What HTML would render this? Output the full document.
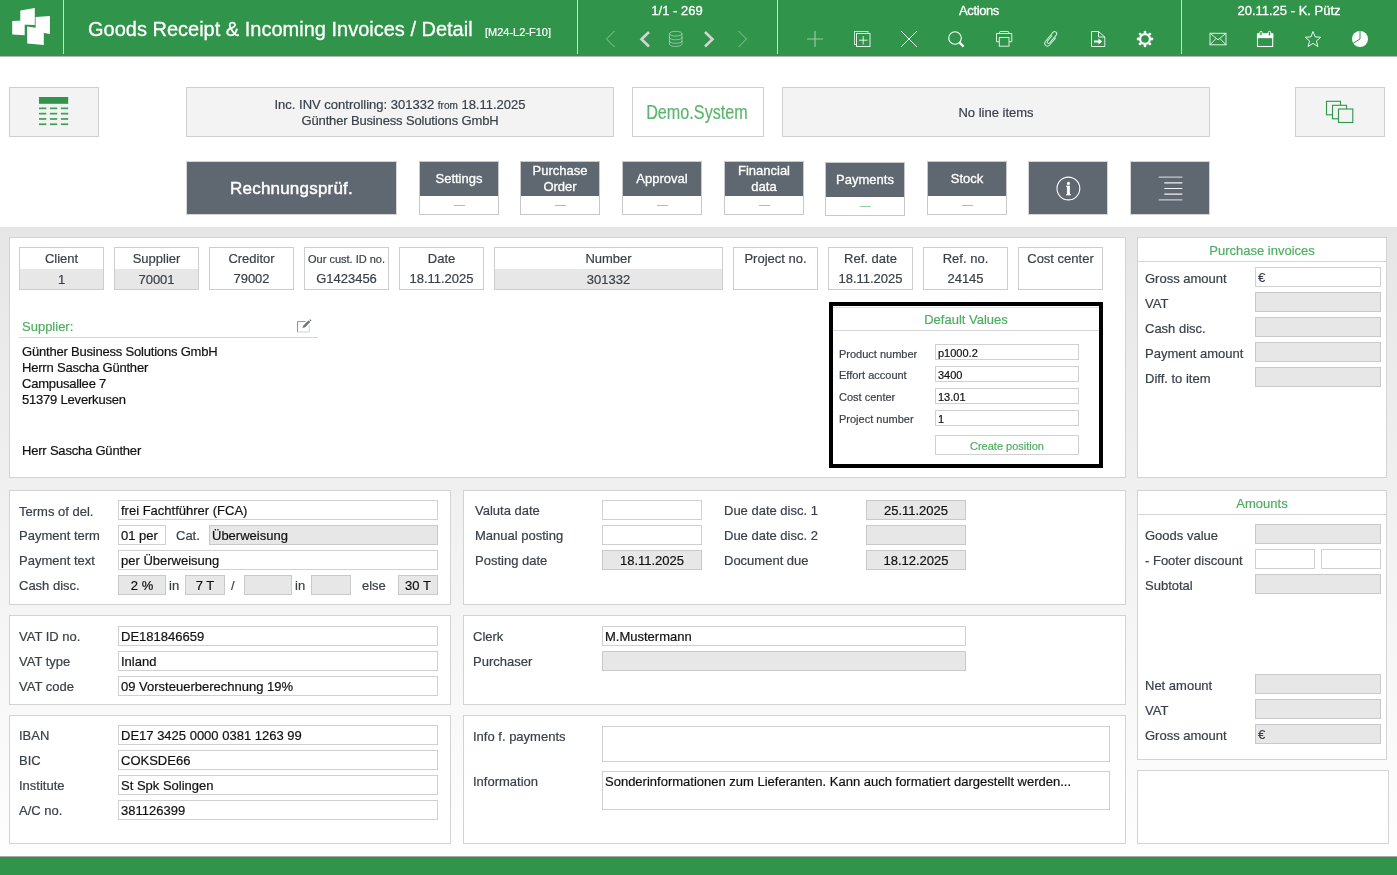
<!DOCTYPE html><html><head><meta charset='utf-8'><title>Goods Receipt &amp; Incoming Invoices / Detail</title><style>
*{box-sizing:border-box;margin:0;padding:0}
html,body{width:1397px;height:875px;overflow:hidden;background:#fff}
body{font-family:"Liberation Sans",sans-serif;font-size:13px;color:#39414a;position:relative;-webkit-text-stroke:.2px}
.a{position:absolute}
.hdr{left:0;top:0;width:1397px;height:57px;background:#30944a;border-bottom:1px solid #b9b4b9}
.vd{top:0;width:1px;height:54px;background:#d4d6d4}
.ht{-webkit-text-stroke:.3px;color:#fff;white-space:nowrap;text-align:center;height:16px;line-height:16px;top:3px}
.box{background:#f3f3f3;border:1px solid #cfcfcf}
.wbox{background:#fff;border:1px solid #cfcfcf}
.ctr{text-align:center;white-space:nowrap}
.tab{width:80px;height:54px;border:1px solid #c9c9c9;background:#fff}
.tab b{display:block;position:absolute;left:0;top:0;width:78px;height:34px;background:#5f6770;color:#fff;font-weight:normal;text-align:center;line-height:16px;-webkit-text-stroke:.3px}
.tab i{display:block;position:absolute;left:34px;top:43px;width:11px;height:1px;background:#8fd09b}
.dk{background:#5f6770;border:1px solid #d6d6d6}
.bg{left:0;top:227px;width:1397px;height:630px;background:linear-gradient(#e6e6e6 0,#fefefe 100%)}
.p{background:#fff;border:1px solid #d3d3d3}
.i{height:20px;line-height:20px;background:#fff;border:1px solid #d0d0d0;color:#111;padding-left:2px;white-space:nowrap;overflow:hidden}
.g{background:#e7e7e7;border-color:#c9c9c9}
.c{text-align:center;padding-left:0}
.l{height:20px;line-height:22px;white-space:nowrap}
.fb{width:85px;height:43px;background:#fff;border:1px solid #cdcdcd}
.fb u,.fb s{display:block;position:absolute;left:0;width:100%;text-align:center;text-decoration:none;white-space:nowrap;height:20px;line-height:20px}
.fb u{top:1px}
.fb s{top:21px;height:20px;line-height:21px}
.fb s{top:20px}
.fb.gg s{top:21px;background:#e7e7e7}
.gt{color:#4fae62;text-align:center;white-space:nowrap}
.hl{height:1px;background:#d6d6d6}
.sm{font-size:11px}
.foot{left:0;top:856px;width:1397px;height:19px;background:#30944a;border-top:1px solid #a9a6ad}
svg{position:absolute;overflow:visible}
</style></head><body><div class='a' style='left:0;top:0;width:1397px;height:875px;will-change:transform'>
<div class='a hdr'></div>
<div class='a vd' style='left:63px'></div>
<div class='a vd' style='left:577px'></div>
<div class='a vd' style='left:777px'></div>
<div class='a vd' style='left:1181px'></div>
<svg style="left:0;top:0" width="64" height="56" viewBox="0 0 64 56"><g fill="#fff">
<polygon points="20.3,10.4 34.8,8 34.8,25 20.3,24.6"/>
<polygon points="12.2,20.9 24.7,20.4 24.7,35.3 12.2,34.5"/>
<polygon points="35.6,17 49.9,15.9 49.9,34 35.6,31.5"/>
<polygon points="27.2,26.6 43.8,29 43.8,44.9 27.2,43.4"/>
</g></svg>
<div class='a' style='left:88px;top:16px;height:26px;line-height:26px;font-size:20px;color:#fff;white-space:nowrap;-webkit-text-stroke:.3px'>Goods Receipt &amp; Incoming Invoices / Detail</div>
<div class='a' style='left:485px;top:25px;height:14px;line-height:14px;font-size:11px;color:#fff;white-space:nowrap'>[M24-L2-F10]</div>
<div class='a ht' style='left:577px;width:200px'>1/1 - 269</div>
<div class='a ht' style='left:777px;width:404px;letter-spacing:-0.4px'>Actions</div>
<div class='a ht' style='left:1181px;width:216px'>20.11.25 - K. Pütz</div>
<svg style="left:0;top:0" width="1397" height="56" viewBox="0 0 1397 56"><polyline points="614.5,31 606.5,39 614.5,47" fill="none" stroke="#fff" stroke-opacity=".45" stroke-width="1"/><polyline points="649,32 641.5,39.3 649,46.5" fill="none" stroke="#d4d4d4" stroke-width="2.6"/><g fill="none" stroke="#fff" stroke-opacity=".45" stroke-width="1"><ellipse cx="675.7" cy="33.7" rx="6.3" ry="2.4"/><path d="M669.4 33.7v10.3c0 1.4 2.8 2.5 6.3 2.5s6.3-1.1 6.3-2.5V33.7M669.4 37.3c0 1.4 2.8 2.5 6.3 2.5s6.3-1.1 6.3-2.5M669.4 40.8c0 1.4 2.8 2.5 6.3 2.5s6.3-1.1 6.3-2.5"/></g><polyline points="705,32 712.5,39.3 705,46.5" fill="none" stroke="#d4d4d4" stroke-width="2.6"/><polyline points="738.5,31 746.5,39 738.5,47" fill="none" stroke="#fff" stroke-opacity=".45" stroke-width="1"/><path d="M815 31v16M807 39h16" fill="none" stroke="#fff" stroke-opacity=".5" stroke-width="1.2"/><g fill="none" stroke="#fff" stroke-opacity=".85" stroke-width="1"><rect x="854.5" y="31.5" width="13.5" height="13" stroke-opacity=".7"/><rect x="856.5" y="33.5" width="13.5" height="13" fill="#30944a"/><path d="M863.2 36v8.5M859 40.2h8.5"/></g><path d="M901 31l16 16M917 31l-16 16" fill="none" stroke="#fff" stroke-opacity=".9" stroke-width="1"/><circle cx="955" cy="38" r="6.3" fill="none" stroke="#fff" stroke-width="1.1"/><path d="M959.6 42.6l4 4" stroke="#fff" stroke-width="2.2" fill="none"/><g fill="none" stroke="#fff" stroke-opacity=".85" stroke-width="1"><path d="M999.5 33.5v-.8a1.2 1.2 0 0 1 1.2-1.2h7a1.2 1.2 0 0 1 1.2 1.2v.8"/><path d="M999.3 41.7h-2.8v-8.2h15.3v8.2h-2.8"/><rect x="999.3" y="37.5" width="9.7" height="8.7"/></g><g transform="translate(1051.1,39) rotate(-50) translate(-8.35,0)"><path d="M12.5 2.8H2.8A2.8 2.8 0 0 1 2.8 -2.8H14.6A2.1 2.1 0 0 1 14.6 1.4H4.5A1.4 1.4 0 0 1 4.5 -1.4H11.5" fill="none" stroke="#fff" stroke-opacity=".8" stroke-width="1"/></g><g stroke="#fff" stroke-opacity=".85" fill="none" stroke-width="1"><path d="M1091.5 31.5h7l6.3 5.5v9.5h-13.3z"/><path d="M1098.5 31.5v5.5h6.3"/></g><path d="M1094 40.6h4.5v-2l3.8 3-3.8 3v-2H1094z" fill="#fff"/><circle cx="1145" cy="39" r="4.9" fill="none" stroke="#fff" stroke-width="2.3"/><circle cx="1145.00" cy="32.10" r="1.45" fill="#fff"/><circle cx="1149.88" cy="34.12" r="1.45" fill="#fff"/><circle cx="1151.90" cy="39.00" r="1.45" fill="#fff"/><circle cx="1149.88" cy="43.88" r="1.45" fill="#fff"/><circle cx="1145.00" cy="45.90" r="1.45" fill="#fff"/><circle cx="1140.12" cy="43.88" r="1.45" fill="#fff"/><circle cx="1138.10" cy="39.00" r="1.45" fill="#fff"/><circle cx="1140.12" cy="34.12" r="1.45" fill="#fff"/><g fill="none" stroke="#fff" stroke-opacity=".85" stroke-width="1"><rect x="1210" y="33.3" width="16" height="11.5"/><path d="M1210 33.3l8 6.5 8-6.5M1210 44.8l6.2-6.5M1226 44.8l-6.2-6.5"/></g><g fill="none" stroke="#fff" stroke-width="1.1"><rect x="1257.5" y="34" width="15.2" height="12.5"/><rect x="1257.5" y="34" width="15.2" height="3.6" fill="#fff"/><rect x="1259.8" y="31.3" width="2.4" height="4.6" rx="1.2" fill="#30944a" stroke-width="1"/><rect x="1268.3" y="31.3" width="2.4" height="4.6" rx="1.2" fill="#30944a" stroke-width="1"/></g><polygon points="1313.00,31.50 1315.12,36.89 1320.89,37.24 1316.42,40.91 1317.88,46.51 1313.00,43.40 1308.12,46.51 1309.58,40.91 1305.11,37.24 1310.88,36.89" fill="none" stroke="#fff" stroke-opacity=".9" stroke-width="1"/><circle cx="1360" cy="39" r="8" fill="#fff"/><path d="M1360 31v8l-6.8 4.2" fill="none" stroke="#30944a" stroke-width="1"/></svg>
<div class='a box' style='left:9px;top:87px;width:90px;height:50px'></div>
<svg style="left:0;top:0" width="120" height="140" viewBox="0 0 120 140"><rect x="39" y="97" width="29.2" height="6.8" fill="#30944a"/><rect x="39" y="107.5" width="7.3" height="1.7" fill="#3f9f55"/><rect x="49.9" y="107.5" width="7.3" height="1.7" fill="#3f9f55"/><rect x="60.9" y="107.5" width="7.3" height="1.7" fill="#3f9f55"/><rect x="39" y="112.8" width="7.3" height="1.7" fill="#3f9f55"/><rect x="49.9" y="112.8" width="7.3" height="1.7" fill="#3f9f55"/><rect x="60.9" y="112.8" width="7.3" height="1.7" fill="#3f9f55"/><rect x="39" y="118.1" width="7.3" height="1.7" fill="#3f9f55"/><rect x="49.9" y="118.1" width="7.3" height="1.7" fill="#3f9f55"/><rect x="60.9" y="118.1" width="7.3" height="1.7" fill="#3f9f55"/><rect x="39" y="123.4" width="7.3" height="1.7" fill="#3f9f55"/><rect x="49.9" y="123.4" width="7.3" height="1.7" fill="#3f9f55"/><rect x="60.9" y="123.4" width="7.3" height="1.7" fill="#3f9f55"/></svg>
<div class='a box' style='left:186px;top:87px;width:428px;height:50px'></div>
<div class='a ctr' style='left:186px;top:97px;width:428px;height:16px;line-height:16px'>Inc. INV controlling: 301332 <span style='font-size:10px'>from</span> 18.11.2025</div>
<div class='a ctr' style='left:186px;top:113px;width:428px;height:16px;line-height:16px;letter-spacing:-.15px'>Günther Business Solutions GmbH</div>
<div class='a wbox' style='left:632px;top:87px;width:132px;height:50px'></div>
<div class='a ctr' style='left:631px;top:99px;width:132px;height:26px;line-height:26px;font-size:19.5px;color:#5cb56d;transform:scaleX(.83);transform-origin:50% 50%'>Demo.System</div>
<div class='a box' style='left:782px;top:87px;width:428px;height:50px'></div>
<div class='a ctr' style='left:782px;top:105px;width:428px;height:16px;line-height:16px'>No line items</div>
<div class='a box' style='left:1295px;top:87px;width:90px;height:50px'></div>
<svg style="left:1295px;top:87px" width="90" height="50" viewBox="1295 87 90 50"><g fill="#f3f3f3" stroke="#30944a" stroke-width="1.1"><rect x="1326.5" y="101.3" width="14" height="13.5"/><rect x="1332.5" y="105.3" width="14" height="13.5"/><rect x="1338.5" y="109" width="14.3" height="13.5"/></g></svg>
<div class='a dk' style='left:186px;top:161px;width:211px;height:54px'></div>
<div class='a ctr' style='left:186px;top:178px;width:211px;height:22px;line-height:22px;font-size:17px;color:#fff;letter-spacing:.2px;-webkit-text-stroke:.45px'>Rechnungsprüf.</div>
<div class='a tab' style='left:419px;top:161px'><b style='padding-top:9px'>Settings</b><i></i></div>
<div class='a tab' style='left:520px;top:161px'><b style='padding-top:1px'>Purchase<br>Order</b><i></i></div>
<div class='a tab' style='left:622px;top:161px'><b style='padding-top:9px'>Approval</b><i></i></div>
<div class='a tab' style='left:724px;top:161px'><b style='padding-top:1px'>Financial<br>data</b><i></i></div>
<div class='a tab' style='left:825px;top:162px'><b style='padding-top:9px'>Payments</b><i></i></div>
<div class='a tab' style='left:927px;top:161px'><b style='padding-top:9px'>Stock</b><i></i></div>
<div class='a dk' style='left:1028px;top:161px;width:80px;height:54px'></div>
<div class='a dk' style='left:1130px;top:161px;width:80px;height:54px'></div>
<svg style="left:1028px;top:161px" width="182" height="54" viewBox="1028 161 182 54"><circle cx="1068.4" cy="188.5" r="11.4" fill="none" stroke="#fff" stroke-width="1.1"/><text x="1068.4" y="195" text-anchor="middle" font-family="Liberation Serif, serif" font-weight="bold" font-size="19" fill="#fff" stroke="#fff" stroke-width=".3">i</text><g stroke="#c9ccd0" stroke-width="1.2"><path d="M1158.7 177.2h23.7M1158.7 199.9h23.7"/></g><g stroke="#f2f3f4" stroke-width="1.2"><path d="M1164.3 182.9h18M1164.3 188.5h18M1164.3 194.2h18"/></g></svg>
<div class='a bg'></div>
<div class='a p' style='left:9px;top:237px;width:1117px;height:241px'></div>
<div class='a p' style='left:9px;top:490px;width:442px;height:115px'></div>
<div class='a p' style='left:463px;top:490px;width:663px;height:115px'></div>
<div class='a p' style='left:9px;top:615px;width:442px;height:90px'></div>
<div class='a p' style='left:463px;top:615px;width:663px;height:90px'></div>
<div class='a p' style='left:9px;top:715px;width:442px;height:129px'></div>
<div class='a p' style='left:463px;top:715px;width:663px;height:129px'></div>
<div class='a p' style='left:1137px;top:237px;width:250px;height:241px'></div>
<div class='a p' style='left:1137px;top:490px;width:250px;height:270px'></div>
<div class='a p' style='left:1137px;top:770px;width:252px;height:74px'></div>
<div class='a fb gg' style='left:19px;top:247px;width:85px'><u>Client</u><s>1</s></div>
<div class='a fb gg' style='left:114px;top:247px;width:85px'><u>Supplier</u><s>70001</s></div>
<div class='a fb' style='left:209px;top:247px;width:85px'><u>Creditor</u><s>79002</s></div>
<div class='a fb' style='left:304px;top:247px;width:85px'><u class=sm>Our cust. ID no.</u><s>G1423456</s></div>
<div class='a fb' style='left:399px;top:247px;width:85px'><u>Date</u><s>18.11.2025</s></div>
<div class='a fb gg' style='left:494px;top:247px;width:229px'><u>Number</u><s>301332</s></div>
<div class='a fb' style='left:733px;top:247px;width:85px'><u>Project no.</u><s></s></div>
<div class='a fb' style='left:828px;top:247px;width:85px'><u>Ref. date</u><s>18.11.2025</s></div>
<div class='a fb' style='left:923px;top:247px;width:85px'><u>Ref. no.</u><s>24145</s></div>
<div class='a fb' style='left:1018px;top:247px;width:85px'><u>Cost center</u><s></s></div>
<div class='a' style='left:22px;top:319px;height:16px;line-height:16px;color:#4fae62;white-space:nowrap'>Supplier:</div>
<div class='a hl' style='left:19px;top:337px;width:299px'></div>
<svg style="left:296px;top:318px" width="16" height="16" viewBox="296 318 16 16"><path d="M305.5 321.6h-8v10.4" fill="none" stroke="#8f959a" stroke-width="1"/><path d="M297.5 332h11.8v-7" fill="none" stroke="#cfd1d3" stroke-width="1"/><path d="M302.4 328.1l1-2.6 5.1-5.1 1.7 1.7-5.1 5.1z" fill="#6a7177"/><path d="M309.3 319.9l.7-.7 1.4 1.4-.7.7z" fill="#50585f"/></svg>
<div class='a' style='left:22px;top:344px;height:16px;line-height:16px;color:#111;white-space:nowrap;letter-spacing:-.2px'>Günther Business Solutions GmbH</div>
<div class='a' style='left:22px;top:360px;height:16px;line-height:16px;color:#111;white-space:nowrap;letter-spacing:-.2px'>Herrn Sascha Günther</div>
<div class='a' style='left:22px;top:376px;height:16px;line-height:16px;color:#111;white-space:nowrap;letter-spacing:-.2px'>Campusallee 7</div>
<div class='a' style='left:22px;top:392px;height:16px;line-height:16px;color:#111;white-space:nowrap;letter-spacing:-.2px'>51379 Leverkusen</div>
<div class='a' style='left:22px;top:443px;height:16px;line-height:16px;color:#111;white-space:nowrap;letter-spacing:-.2px'>Herr Sascha Günther</div>
<div class='a' style='left:829px;top:302px;width:274px;height:166px;border:4px solid #000;background:#fff'></div>
<div class='a hl' style='left:833px;top:307px;width:266px;background:#e0e0e0'></div>
<div class='a hl' style='left:833px;top:330px;width:266px'></div>
<div class='a gt' style='left:833px;top:312px;width:266px;height:16px;line-height:16px'>Default Values</div>
<div class='a sm' style='left:839px;top:345px;height:16px;line-height:19px;white-space:nowrap'>Product number</div>
<div class='a i sm' style='left:935px;top:344px;width:144px;height:16px;line-height:17px'>p1000.2</div>
<div class='a sm' style='left:839px;top:366px;height:16px;line-height:19px;white-space:nowrap'>Effort account</div>
<div class='a i sm' style='left:935px;top:366px;width:144px;height:16px;line-height:17px'>3400</div>
<div class='a sm' style='left:839px;top:388px;height:16px;line-height:19px;white-space:nowrap'>Cost center</div>
<div class='a i sm' style='left:935px;top:388px;width:144px;height:16px;line-height:17px'>13.01</div>
<div class='a sm' style='left:839px;top:410px;height:16px;line-height:19px;white-space:nowrap'>Project number</div>
<div class='a i sm' style='left:935px;top:410px;width:144px;height:16px;line-height:17px'>1</div>
<div class='a i sm c' style='left:935px;top:435px;width:144px;height:20px;line-height:20px;color:#4fae62'>Create position</div>
<div class='a gt' style='left:1137px;top:243px;width:250px;height:16px;line-height:16px'>Purchase invoices</div>
<div class='a hl' style='left:1138px;top:261px;width:248px'></div>
<div class='a l' style='left:1145px;top:268px'>Gross amount</div>
<div class='a i' style='left:1255px;top:267px;width:126px;color:#39414a'>€</div>
<div class='a l' style='left:1145px;top:293px'>VAT</div>
<div class='a i g' style='left:1255px;top:292px;width:126px;color:#39414a'></div>
<div class='a l' style='left:1145px;top:318px'>Cash disc.</div>
<div class='a i g' style='left:1255px;top:317px;width:126px;color:#39414a'></div>
<div class='a l' style='left:1145px;top:343px'>Payment amount</div>
<div class='a i g' style='left:1255px;top:342px;width:126px;color:#39414a'></div>
<div class='a l' style='left:1145px;top:368px'>Diff. to item</div>
<div class='a i g' style='left:1255px;top:367px;width:126px;color:#39414a'></div>
<div class='a gt' style='left:1137px;top:496px;width:250px;height:16px;line-height:16px'>Amounts</div>
<div class='a hl' style='left:1138px;top:514px;width:248px'></div>
<div class='a l' style='left:1145px;top:525px'>Goods value</div>
<div class='a i g' style='left:1255px;top:524px;width:126px;color:#39414a'></div>
<div class='a l' style='left:1145px;top:550px'>- Footer discount</div>
<div class='a i' style='left:1255px;top:549px;width:60px'></div><div class='a i' style='left:1321px;top:549px;width:60px'></div>
<div class='a l' style='left:1145px;top:575px'>Subtotal</div>
<div class='a i g' style='left:1255px;top:574px;width:126px;color:#39414a'></div>
<div class='a l' style='left:1145px;top:675px'>Net amount</div>
<div class='a i g' style='left:1255px;top:674px;width:126px;color:#39414a'></div>
<div class='a l' style='left:1145px;top:700px'>VAT</div>
<div class='a i g' style='left:1255px;top:699px;width:126px;color:#39414a'></div>
<div class='a l' style='left:1145px;top:725px'>Gross amount</div>
<div class='a i g' style='left:1255px;top:724px;width:126px;color:#39414a'>€</div>
<div class='a l' style='left:19px;top:501px'>Terms of del.</div>
<div class='a i ' style='left:118px;top:500px;width:320px'>frei Fachtführer (FCA)</div>
<div class='a l' style='left:19px;top:525px'>Payment term</div>
<div class='a i ' style='left:118px;top:525px;width:48px'>01 per</div>
<div class='a l' style='left:176px;top:525px'>Cat.</div>
<div class='a i g' style='left:209px;top:525px;width:229px'>Überweisung</div>
<div class='a l' style='left:19px;top:550px'>Payment text</div>
<div class='a i ' style='left:118px;top:550px;width:320px'>per Überweisung</div>
<div class='a l' style='left:19px;top:575px'>Cash disc.</div>
<div class='a i g c' style='left:118px;top:575px;width:48px'>2 %</div>
<div class='a l' style='left:169px;top:575px'>in</div>
<div class='a i g c' style='left:185px;top:575px;width:40px'>7 T</div>
<div class='a l' style='left:231px;top:575px'>/</div>
<div class='a i g' style='left:244px;top:575px;width:48px'></div>
<div class='a l' style='left:295px;top:575px'>in</div>
<div class='a i g' style='left:311px;top:575px;width:40px'></div>
<div class='a l' style='left:362px;top:575px'>else</div>
<div class='a i g c' style='left:398px;top:575px;width:40px'>30 T</div>
<div class='a l' style='left:475px;top:500px'>Valuta date</div>
<div class='a i ' style='left:602px;top:500px;width:100px'></div>
<div class='a l' style='left:475px;top:525px'>Manual posting</div>
<div class='a i ' style='left:602px;top:525px;width:100px'></div>
<div class='a l' style='left:475px;top:550px'>Posting date</div>
<div class='a i g c' style='left:602px;top:550px;width:100px'>18.11.2025</div>
<div class='a l' style='left:724px;top:500px'>Due date disc. 1</div>
<div class='a i g c' style='left:866px;top:500px;width:100px'>25.11.2025</div>
<div class='a l' style='left:724px;top:525px'>Due date disc. 2</div>
<div class='a i g' style='left:866px;top:525px;width:100px'></div>
<div class='a l' style='left:724px;top:550px'>Document due</div>
<div class='a i g c' style='left:866px;top:550px;width:100px'>18.12.2025</div>
<div class='a l' style='left:19px;top:626px'>VAT ID no.</div>
<div class='a i ' style='left:118px;top:626px;width:320px'>DE181846659</div>
<div class='a l' style='left:19px;top:651px'>VAT type</div>
<div class='a i ' style='left:118px;top:651px;width:320px'>Inland</div>
<div class='a l' style='left:19px;top:676px'>VAT code</div>
<div class='a i ' style='left:118px;top:676px;width:320px'>09 Vorsteuerberechnung 19%</div>
<div class='a l' style='left:473px;top:626px'>Clerk</div>
<div class='a i ' style='left:602px;top:626px;width:364px'>M.Mustermann</div>
<div class='a l' style='left:473px;top:651px'>Purchaser</div>
<div class='a i g' style='left:602px;top:651px;width:364px'></div>
<div class='a l' style='left:19px;top:725px'>IBAN</div>
<div class='a i ' style='left:118px;top:725px;width:320px'>DE17 3425 0000 0381 1263 99</div>
<div class='a l' style='left:19px;top:750px'>BIC</div>
<div class='a i ' style='left:118px;top:750px;width:320px'>COKSDE66</div>
<div class='a l' style='left:19px;top:775px'>Institute</div>
<div class='a i ' style='left:118px;top:775px;width:320px'>St Spk Solingen</div>
<div class='a l' style='left:19px;top:800px'>A/C no.</div>
<div class='a i ' style='left:118px;top:800px;width:320px'>381126399</div>
<div class='a l' style='left:473px;top:726px'>Info f. payments</div>
<div class='a i' style='left:602px;top:726px;width:508px;height:36px'></div>
<div class='a l' style='left:473px;top:771px'>Information</div>
<div class='a i' style='left:602px;top:771px;width:508px;height:39px;line-height:19px'>Sonderinformationen zum Lieferanten. Kann auch formatiert dargestellt werden...</div>
<div class='a foot'></div>
</div></body></html>
